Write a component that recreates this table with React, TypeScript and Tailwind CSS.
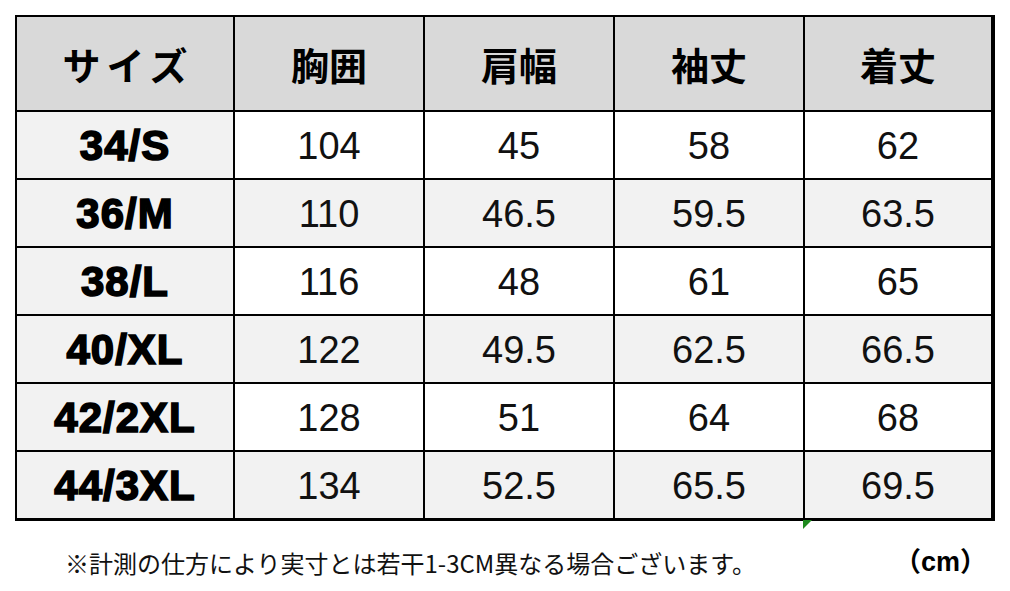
const headers = ['サイズ', '胸囲', '肩幅', '袖丈', '着丈'];

const rows: [string, string, string, string, string][] = [
  ['34/S', '104', '45', '58', '62'],
  ['36/M', '110', '46.5', '59.5', '63.5'],
  ['38/L', '116', '48', '61', '65'],
  ['40/XL', '122', '49.5', '62.5', '66.5'],
  ['42/2XL', '128', '51', '64', '68'],
  ['44/3XL', '134', '52.5', '65.5', '69.5'],
];

const jp = "font-['Noto_Sans_CJK_JP','Noto_Sans',sans-serif]";
const arial = "font-['Liberation_Sans',Arial,sans-serif]";

export default function App() {
  return (
    <div className="w-[1010px] h-[591px] bg-white pl-[15px] pt-[15px] text-black">
      <div className="relative w-[980px]">
        <div className="grid grid-cols-[216px_188px_188px_188px_186px] grid-rows-[93px_repeat(6,66px)] gap-[2px] bg-black pt-[2px] pl-[2px] pr-[4px] pb-[3px]">
          {headers.map((h, i) => (
            <div
              key={h}
              className={`flex items-center justify-center bg-[#d9d9d9] text-[38px] font-bold ${jp} ${i === 0 ? 'tracking-[6px] pl-[6px]' : ''}`}
            >
              {h}
            </div>
          ))}
          {rows.map((r, ri) => (
            <Row key={r[0]} cells={r} shaded={ri % 2 === 1} />
          ))}
        </div>
        <svg className="absolute left-[788px] top-[505px]" width="9" height="9" viewBox="0 0 9 9">
          <polygon points="0,0 9,0 0,9" fill="#1e8a1e" />
        </svg>
      </div>
      <div className="flex items-center justify-between w-[980px] pl-[50px] pr-[8px] mt-[28px]">
        <span className={`text-[24px] leading-none ${jp} text-[#111]`}>
          ※計測の仕方により実寸とは若干1-3CM異なる場合ございます。
        </span>
        <span className="text-[27px] leading-none font-bold font-['Liberation_Sans','Noto_Sans_CJK_JP',sans-serif]">
          （cm）
        </span>
      </div>
    </div>
  );
}

function Row({ cells, shaded }: { cells: string[]; shaded: boolean }) {
  return (
    <>
      {cells.map((c, i) => (
        <div
          key={i}
          className={`flex items-center justify-center ${arial} ${
            i === 0
              ? 'bg-[#f2f2f2] text-[42px] font-bold tracking-[1px] [-webkit-text-stroke:1.6px_black]'
              : `${shaded ? 'bg-[#f2f2f2]' : 'bg-white'} text-[38px] pt-[3px] text-[#111]`
          }`}
        >
          {c}
        </div>
      ))}
    </>
  );
}
